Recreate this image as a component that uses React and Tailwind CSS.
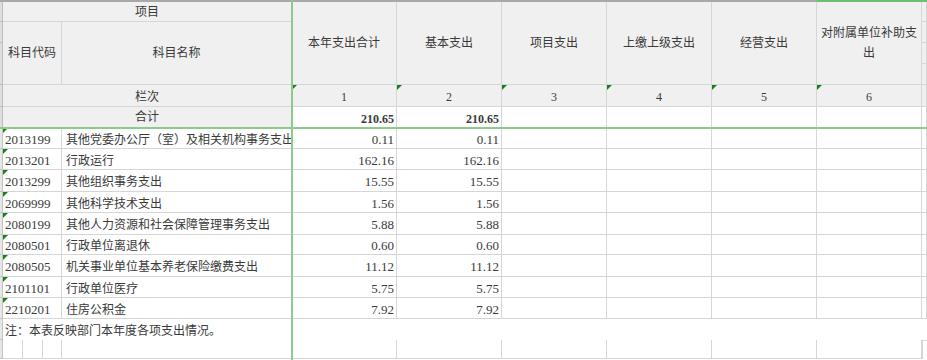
import React from 'react';

const rows = [
    ['2013199', '其他党委办公厅（室）及相关机构事务支出', '0.11', '0.11'],
    ['2013201', '行政运行', '162.16', '162.16'],
    ['2013299', '其他组织事务支出', '15.55', '15.55'],
    ['2069999', '其他科学技术支出', '1.56', '1.56'],
    ['2080199', '其他人力资源和社会保障管理事务支出', '5.88', '5.88'],
    ['2080501', '行政单位离退休', '0.60', '0.60'],
    ['2080505', '机关事业单位基本养老保险缴费支出', '11.12', '11.12'],
    ['2101101', '行政单位医疗', '5.75', '5.75'],
    ['2210201', '住房公积金', '7.92', '7.92'],
];

const heads = ['本年支出合计', '基本支出', '项目支出', '上缴上级支出', '经营支出', '对附属单位补助支出'];
const colStarts = ['col-start-4', 'col-start-5', 'col-start-6', 'col-start-7', 'col-start-8', 'col-start-9'];
const rowStarts = ['row-start-7', 'row-start-8', 'row-start-9', 'row-start-10', 'row-start-11', 'row-start-12', 'row-start-13', 'row-start-14', 'row-start-15'];

const line = 'border-b border-r border-[#d6d6d6]';
const head = 'bg-[#f0f0f0] ' + line;

function Tri() {
    return (
        <span className="absolute left-0 top-0 w-0 h-0 border-t-[5px] border-r-[5px] border-t-[#17801a] border-r-transparent" />
    );
}

function App() {
    return (
        <div
            className="relative w-[927px] h-[360px] overflow-hidden bg-white text-[12px] text-[#3a3a3a]"
            style={{ fontFamily: '"Liberation Serif", "Noto Sans CJK SC", serif' }}
        >
            <div className="grid border-t-2 border-[#a8a8a8] grid-cols-[3px_59px_230px_105px_105px_105px_105px_105px_105px_5px] grid-rows-[20px_21px_21px_21px_22px_21px_21px_21px_22px_21px_22px_20px_22px_21px_21px_21px_19px]">
                {/* left strip */}
                <div className="col-start-1 row-start-1 bg-[#dedede] border-b border-r border-[#bdbdbd]" />
                <div className="col-start-1 row-start-2 bg-[#dedede] border-b border-r border-[#bdbdbd]" />
                <div className="col-start-1 row-start-3 row-span-2 bg-[#dedede] border-b border-r border-[#bdbdbd]" />
                <div className="col-start-1 row-start-5 bg-[#dedede] border-b border-r border-[#bdbdbd]" />
                <div className="col-start-1 row-start-6 bg-[#dedede] border-b border-r border-[#bdbdbd]" />
                {rowStarts.map((r) => (
                    <div key={r} className={'col-start-1 bg-[#e6e6e6] border-b border-r border-[#c4c4c4] ' + r} />
                ))}
                <div className="col-start-1 row-start-16 bg-[#e6e6e6] border-b border-r border-[#c4c4c4]" />
                <div className="col-start-1 row-start-17 bg-[#e6e6e6] border-b border-r border-[#c4c4c4]" />

                {/* header */}
                <div className={'col-start-2 col-span-2 row-start-1 flex items-center justify-center ' + head}>项目</div>
                <div className={'col-start-2 row-start-2 row-span-3 flex items-center justify-center ' + head}>科目代码</div>
                <div className={'col-start-3 row-start-2 row-span-3 flex items-center justify-center ' + head}>科目名称</div>
                {heads.map((h, i) => (
                    <div
                        key={h}
                        className={'row-start-1 row-span-4 flex items-center justify-center text-center leading-[20px] px-[3px] ' + head + ' ' + colStarts[i]}
                    >
                        {h}
                    </div>
                ))}
                <div className={'col-start-10 row-start-1 ' + head} />
                <div className={'col-start-10 row-start-2 ' + head} />
                <div className={'col-start-10 row-start-3 ' + head} />
                <div className={'col-start-10 row-start-4 ' + head} />

                {/* 栏次 */}
                <div className={'col-start-2 col-span-2 row-start-5 flex items-center justify-center pt-[2px] ' + head}>栏次</div>
                {heads.map((h, i) => (
                    <div
                        key={'n' + i}
                        className={'relative row-start-5 flex items-center justify-center pt-[3px] ' + head + ' ' + colStarts[i]}
                    >
                        <Tri />
                        {i + 1}
                    </div>
                ))}
                <div className={'col-start-10 row-start-5 ' + head} />

                {/* 合计 */}
                <div className={'col-start-2 col-span-2 row-start-6 flex items-center justify-center ' + head}>合计</div>
                {heads.map((h, i) => (
                    <div
                        key={'t' + i}
                        className={'row-start-6 flex items-center justify-end pr-[2px] pt-[3px] font-bold ' + line + ' ' + colStarts[i]}
                    >
                        {i < 2 ? '210.65' : ''}
                    </div>
                ))}
                <div className={'col-start-10 row-start-6 ' + line} />

                {/* data */}
                {rows.map((r, ri) => (
                    <React.Fragment key={r[0]}>
                        <div className={'relative col-start-2 flex items-center pl-[2px] pt-[3px] text-[13px] ' + line + ' ' + rowStarts[ri]}>
                            <Tri />
                            {r[0]}
                        </div>
                        <div className={'col-start-3 flex items-center pl-[4px] pt-[3px] whitespace-nowrap overflow-hidden ' + line + ' ' + rowStarts[ri]}>
                            {r[1]}
                        </div>
                        {colStarts.map((c, ci) => (
                            <div
                                key={c}
                                className={'flex items-center justify-end pr-[2px] pt-[3px] text-[13px] ' + line + ' ' + c + ' ' + rowStarts[ri]}
                            >
                                {ci === 0 ? r[2] : ci === 1 ? r[3] : ''}
                            </div>
                        ))}
                        <div className={'col-start-10 ' + line + ' ' + rowStarts[ri]} />
                    </React.Fragment>
                ))}

                {/* note */}
                <div className="col-start-2 col-span-9 row-start-16 flex items-center pl-[2px] pt-[2px]">
                    注：本表反映部门本年度各项支出情况。
                </div>

                {/* last row */}
                <div className="col-start-2 row-start-17 flex">
                    <div className={'w-[20px] ' + line} />
                    <div className={'w-[20px] ' + line} />
                    <div className={'flex-1 ' + line} />
                </div>
                <div className={'col-start-3 row-start-17 ' + line} />
                {colStarts.map((c) => (
                    <div key={'l' + c} className={'row-start-17 ' + line + ' ' + c} />
                ))}
                <div className="col-start-10 row-start-17 border-l border-t border-[#d6d6d6]" />
            </div>

            {/* frozen pane lines */}
            <div className="absolute left-[291px] top-0 w-[2px] h-[360px] bg-[#8ccb8c]" />
            <div className="absolute left-0 top-[127px] w-[927px] h-[2px] bg-[#8ccb8c]" />
            <div className="absolute left-[817px] top-0 w-[110px] h-[2px] bg-[#6cbf6c]" />
        </div>
    );
}

export default App;
